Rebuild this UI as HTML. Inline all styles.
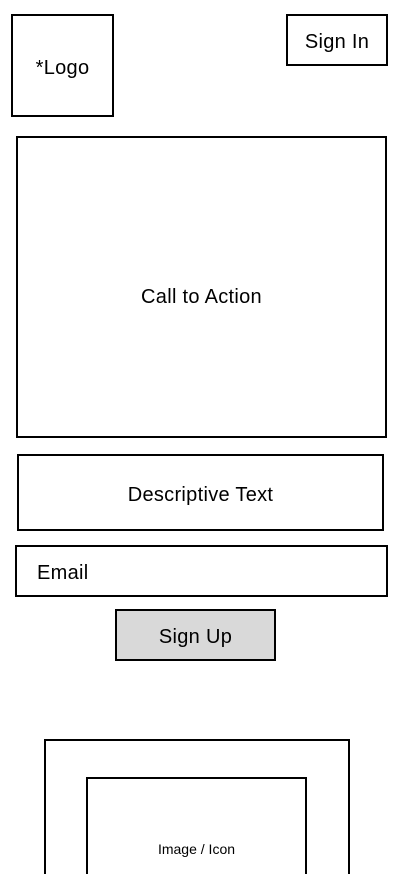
<!DOCTYPE html>
<html style="overflow:hidden;height:874px"><head><meta charset="utf-8"><style>
body{margin:0;width:402px;height:874px;overflow:hidden;background:#fff;font-family:"Liberation Sans",sans-serif;color:#000;position:relative}
.b{position:absolute;box-sizing:border-box;border:2px solid #000;display:flex;align-items:center;justify-content:center;font-size:20px;letter-spacing:0.3px;padding-top:5px}
</style></head><body>
<div class="b" style="left:11px;top:14px;width:103px;height:103px">*Logo</div>
<div class="b" style="left:286px;top:14px;width:102px;height:52px">Sign In</div>
<div class="b" style="left:16px;top:136px;width:371px;height:302px;padding-top:20px">Call to Action</div>
<div class="b" style="left:17px;top:454px;width:367px;height:77px">Descriptive Text</div>
<div class="b" style="left:15px;top:545px;width:373px;height:52px;justify-content:flex-start;padding-left:20px">Email</div>
<div class="b" style="left:115px;top:609px;width:161px;height:52px;background:#d9d9d9">Sign Up</div>
<div class="b" style="left:44px;top:739px;width:306px;height:135px;border-bottom:none"></div>
<div class="b" style="left:86px;top:777px;width:221px;height:97px;border-bottom:none;align-items:flex-start;padding-top:62px;font-size:14px;letter-spacing:0">Image / Icon</div>
</body></html>
